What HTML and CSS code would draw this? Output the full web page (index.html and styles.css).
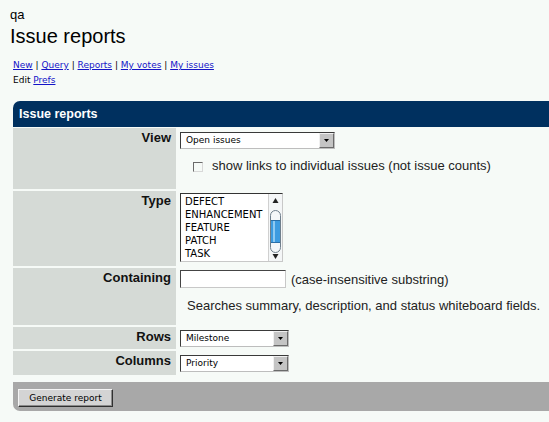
FILE: index.html
```html
<!DOCTYPE html>
<html>
<head>
<meta charset="utf-8">
<title>Issue reports</title>
<link rel="stylesheet" href="styles.css">
</head>
<body>
<div class="project">qa</div>
<h1 class="title">Issue reports</h1>
<div class="nav">
  <div><a href="#">New</a> | <a href="#">Query</a> | <a href="#">Reports</a> | <a href="#">My votes</a> | <a href="#">My issues</a></div>
  <div>Edit <a href="#">Prefs</a></div>
</div>
<div class="panel">
  <div class="phead">Issue reports</div>
  <div class="grid">
    <div class="lab">View</div>
    <div class="val val-view">
      <div class="sel sel-wide"><span class="sel-text">Open issues</span><span class="sel-btn"><svg width="13" height="13" viewBox="0 0 13 13"><polygon points="4,5 9,5 6.5,8" fill="#000"/></svg></span></div>
      <div class="chkline"><span class="chk"></span>show links to individual issues (not issue counts)</div>
    </div>

    <div class="lab">Type</div>
    <div class="val val-type">
      <div class="lst">
        <div class="lst-items">
          <div>DEFECT</div>
          <div>ENHANCEMENT</div>
          <div>FEATURE</div>
          <div>PATCH</div>
          <div>TASK</div>
        </div>
        <div class="lst-bar">
          <svg width="13" height="67" viewBox="0 0 13 67">
            <polygon points="3.5,9 9.5,9 6.5,4" fill="#222"/>
            <rect x="1.5" y="16.5" width="10" height="42" rx="5" ry="5" fill="#f4f7f9" stroke="#6f7f8c"/>
            <rect x="2" y="26" width="9" height="23" fill="#3d9be0"/>
            <rect x="4" y="26" width="2" height="23" fill="#8fcaf2"/>
            <rect x="2" y="26" width="9" height="1" fill="#2a6fa8"/>
            <rect x="2" y="48" width="9" height="1" fill="#2a6fa8"/>
            <polygon points="3.5,60 9.5,60 6.5,65" fill="#222"/>
          </svg>
        </div>
      </div>
    </div>

    <div class="lab">Containing</div>
    <div class="val val-cont">
      <div class="cont-line"><span class="inp"></span>(case-insensitive substring)</div>
      <div class="hint">Searches summary, description, and status whiteboard fields.</div>
    </div>

    <div class="lab">Rows</div>
    <div class="val val-rows">
      <div class="sel sel-mid"><span class="sel-text">Milestone</span><span class="sel-btn"><svg width="13" height="13" viewBox="0 0 13 13"><polygon points="4,5 9,5 6.5,8" fill="#000"/></svg></span></div>
    </div>

    <div class="lab">Columns</div>
    <div class="val val-cols">
      <div class="sel sel-mid"><span class="sel-text">Priority</span><span class="sel-btn"><svg width="13" height="13" viewBox="0 0 13 13"><polygon points="4,5 9,5 6.5,8" fill="#000"/></svg></span></div>
    </div>
  </div>
  <div class="pfoot"><button class="gen" type="button">Generate report</button></div>
</div>
</body>
</html>
```

FILE: styles.css
```css
html, body {
  margin: 0;
  background: #f6faf7;
}
body {
  padding: 7px 0 0 10px;
  font-family: "Liberation Sans", Arial, sans-serif;
  color: #000;
}
.project {
  font-size: 13px;
  line-height: 15px;
}
.title {
  font-size: 20px;
  font-weight: normal;
  line-height: 23px;
  margin: 3px 0 0;
}
.nav {
  font-family: "DejaVu Sans", sans-serif;
  font-size: 9px;
  line-height: 15px;
  margin: 10px 0 0 3px;
}
.nav a {
  color: #1414c8;
}
.panel {
  margin: 13px 0 0 3px;
}
.phead {
  background: #00305f;
  color: #fff;
  font-weight: bold;
  font-size: 12.5px;
  height: 26px;
  line-height: 26px;
  padding-left: 6px;
  border-top-left-radius: 7px;
}
.grid {
  display: grid;
  grid-template-columns: 163px 1fr;
  row-gap: 2px;
  margin-top: 1px;
}
.lab {
  background: #d5dad6;
  font-weight: bold;
  font-size: 13px;
  line-height: 15px;
  text-align: right;
  padding: 2px 5px 0 0;
  color: #111;
}
.val {
  padding: 4px 0 0 4px;
  font-size: 13px;
  line-height: 15px;
  color: #222;
}
.val-view { padding-bottom: 16px; }
.val-type { padding-top: 2px; padding-bottom: 4px; }
.val-cont { padding-top: 2px; padding-bottom: 12px; }
.val-rows { padding-top: 3px; padding-bottom: 2px; }
.val-cols { padding-top: 4px; padding-bottom: 3px; }

.sel {
  display: flex;
  box-sizing: border-box;
  height: 17px;
  border: 1px solid;
  border-color: #3a3a3a #bdbdbd #bdbdbd #3a3a3a;
  background: #fff;
  font-family: "DejaVu Sans", sans-serif;
  font-size: 9px;
  color: #000;
}
.sel-wide { width: 155px; }
.sel-mid { width: 109px; }
.sel-text {
  flex: 1;
  padding-left: 5px;
  line-height: 15px;
}
.sel-btn {
  box-sizing: border-box;
  width: 15px;
  height: 15px;
  background: #c4c4c4;
  border: 1px solid;
  border-color: #f0f0f0 #6a6a6a #6a6a6a #f0f0f0;
  display: flex;
  align-items: center;
  justify-content: center;
}
.chkline {
  margin-top: 9px;
  padding-left: 13px;
}
.chk {
  display: inline-block;
  box-sizing: border-box;
  width: 10px;
  height: 10px;
  border: 1px solid;
  border-color: #6a6a6a #d8d8d8 #d8d8d8 #6a6a6a;
  vertical-align: -2px;
  margin-right: 9px;
}
.lst {
  display: flex;
  box-sizing: border-box;
  width: 103px;
  height: 69px;
  border: 1px solid;
  border-color: #333 #c8c8c8 #c8c8c8 #333;
  background: #fff;
}
.lst-items {
  flex: 1;
  padding: 1px 0 0 4px;
  font-family: "DejaVu Sans", sans-serif;
  font-size: 10px;
  line-height: 13px;
  color: #000;
  overflow: hidden;
}
.lst-bar {
  width: 13px;
  background: #f4f6f7;
  border-left: 1px solid #d0d0d0;
}
.lst-bar svg { display: block; }
.cont-line {
  display: flex;
  align-items: center;
  height: 18px;
}
.inp {
  box-sizing: border-box;
  width: 106px;
  height: 18px;
  background: #fff;
  border: 1px solid;
  border-color: #444 #c8c8c8 #c8c8c8 #444;
  margin-right: 5px;
}
.hint {
  margin-top: 10px;
  padding-left: 7px;
}
.pfoot {
  margin-top: 7px;
  height: 29px;
  box-sizing: border-box;
  padding: 7px 0 0 5px;
  background: #a8a8a8;
  border-bottom-left-radius: 7px;
}
.gen {
  display: block;
  width: 95px;
  height: 18px;
  padding: 0;
  margin: 0;
  font-family: "DejaVu Sans", sans-serif;
  font-size: 9px;
  color: #000;
  background: #d4d4d4;
  border: 1px solid;
  border-color: #f4f4f4 #303030 #303030 #f4f4f4;
  box-shadow: inset -1px -1px 0 #8a8a8a;
}
```
